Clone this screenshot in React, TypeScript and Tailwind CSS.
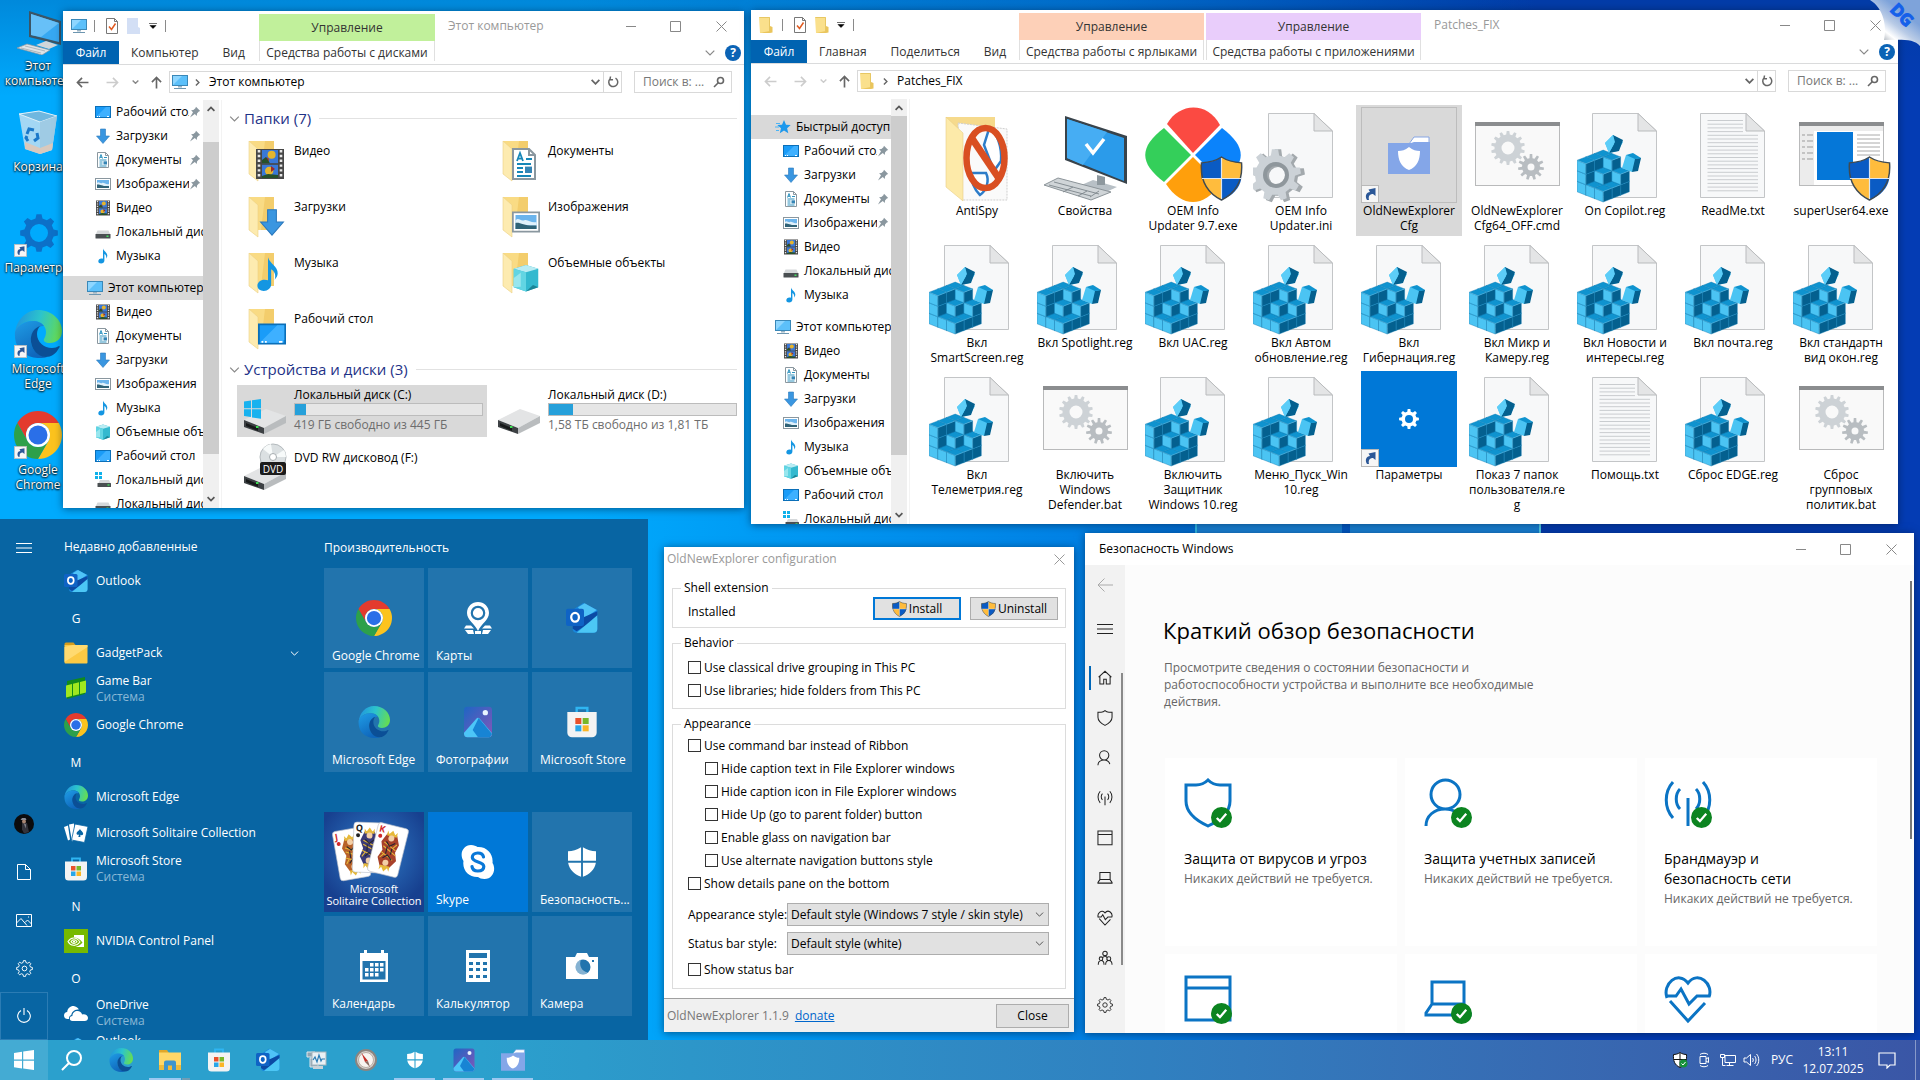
import React from 'react';
import clsx from 'clsx';

type IconProps = { className?: string };

/* ---------- shape helpers ---------- */

const gearPath = (cx: number, cy: number, outer: number, inner: number, hole: number, teeth: number) => {
  const step = (Math.PI * 2) / teeth;
  const point = (r: number, a: number) =>
    `${(cx + r * Math.cos(a)).toFixed(2)} ${(cy + r * Math.sin(a)).toFixed(2)}`;
  let d = '';
  for (let i = 0; i < teeth; i++) {
    const a = i * step - Math.PI / 2;
    d += `${i === 0 ? 'M' : 'L'}${point(inner, a - step * 0.3)}`;
    d += `L${point(outer, a - step * 0.17)}L${point(outer, a + step * 0.17)}L${point(inner, a + step * 0.3)}`;
  }
  d += 'Z';
  d += `M${cx + hole} ${cy}A${hole} ${hole} 0 1 0 ${cx - hole} ${cy}A${hole} ${hole} 0 1 0 ${cx + hole} ${cy}Z`;
  return d;
};

/* ---------- small explorer icons ---------- */

const PcIcon = ({ className }: IconProps) => (
  <svg viewBox="0 0 16 16" className={className}>
    <rect x="0.5" y="1.5" width="15" height="10" fill="#5cc0fa" stroke="#3a88b8" />
    <path d="M1 11L10 2H1z" fill="#8ed6ff" />
    <path d="M6 12h4v1.5H6z" fill="#9bb4c4" />
    <path d="M2 14.5h12" stroke="#6d96b0" />
  </svg>
);

const DesktopIcon = ({ className }: IconProps) => (
  <svg viewBox="0 0 16 16" className={className}>
    <rect x="0.5" y="2.5" width="15" height="11" fill="#1a9cf8" stroke="#0b6fb8" />
    <path d="M1 13L11 3h4v8l-2 2z" fill="#3eb0ff" />
    <path d="M2 12.5h1M4 12.5h1M12 12.5h2" stroke="#fff" />
  </svg>
);

const DownloadIcon = ({ className }: IconProps) => (
  <svg viewBox="0 0 16 16" className={className}>
    <path d="M5.5 1h5v7h4L8 15.5 1.5 8h4z" fill="#3a96e0" stroke="#2a78bc" strokeWidth="0.6" />
  </svg>
);

const DocIcon = ({ className }: IconProps) => (
  <svg viewBox="0 0 16 16" className={className}>
    <path d="M2.5 0.5h8l3 3v12h-11z" fill="#fff" stroke="#8a979f" />
    <path d="M10.5 .5v3h3" fill="none" stroke="#8a979f" />
    <path d="M4.5 6.5l1.5-4 1.5 4M5 5.3h2M9 5.5h3M4.5 8h7M4.5 10h3M4.5 12h3M4.5 14h7" stroke="#1787b8" strokeWidth="0.9" fill="none" />
    <rect x="8.5" y="9.3" width="3.5" height="3.2" fill="#3585b5" />
  </svg>
);

const PictureIcon = ({ className }: IconProps) => (
  <svg viewBox="0 0 16 16" className={className}>
    <rect x="0.5" y="2.5" width="15" height="11" fill="#fff" stroke="#8a979f" />
    <rect x="2" y="4" width="12" height="8" fill="#6bb4ec" />
    <path d="M2 7c2-2 3 1 5 0s4 2 7 1v2H2z" fill="#dff0fb" />
    <path d="M2 8.5c3-.5 5 2 12 1.5v2H2z" fill="#2f6277" />
  </svg>
);

const VideoIcon = ({ className }: IconProps) => (
  <svg viewBox="0 0 16 16" className={className}>
    <rect x="1" y="0.5" width="14" height="15" fill="#474747" />
    <path d="M2.5 1v14M13.5 1v14" stroke="#e8e8e8" strokeWidth="1.3" strokeDasharray="1.2 1.2" />
    <rect x="4" y="1" width="8" height="6.6" fill="#3978d8" />
    <rect x="4" y="8.4" width="8" height="6.6" fill="#3978d8" />
    <circle cx="8.8" cy="3.4" r="2" fill="#e5b52d" />
    <circle cx="6.3" cy="6" r="1.2" fill="#b3322c" />
    <path d="M4 6l2-1.5L8 7.6H4z" fill="#27512b" />
    <circle cx="7.6" cy="11.5" r="2.1" fill="#e5b52d" />
    <path d="M8.5 9v3l2-1.5z" fill="#9c2b2b" />
    <path d="M4 14l3-1 5 .5V15H4z" fill="#27512b" />
  </svg>
);

const DriveIcon = ({ className }: IconProps) => (
  <svg viewBox="0 0 16 16" className={className}>
    <path d="M2.5 6.5h11l2 4.5H.5z" fill="#d5d8da" />
    <rect x="0.5" y="10" width="15" height="4.5" rx="0.5" fill="#4a4f52" />
    <rect x="11.5" y="11.5" width="2" height="1.5" fill="#43e05f" />
  </svg>
);

const SystemDriveIcon = ({ className }: IconProps) => (
  <svg viewBox="0 0 16 16" className={className}>
    <path d="M0 0h3v3H0zM4 0h3v3H4zM0 4h3v3H0zM4 4h3v3H4z" fill="#0fb1ea" />
    <path d="M5 8h9l2 4H3z" fill="#d5d8da" />
    <rect x="2.5" y="11" width="13.5" height="4" rx="0.5" fill="#4a4f52" />
    <rect x="12.5" y="12.3" width="2" height="1.4" fill="#43e05f" />
  </svg>
);

const MusicIcon = ({ className }: IconProps) => (
  <svg viewBox="0 0 16 16" className={className}>
    <path d="M8 .5c.6 2.7 4.5 4 4.300 7.300 0 1.200-.7 2-1.300 2.700.7-2.400-.3-3.800-1.600-4.600v6.600c0 1.700-1.500 3-3.300 3-1.600 0-2.800-1-2.800-2.300C3.300 11.700 4.600 10.500 6.500 10.500c.6 0 1 .1 1.500.3z" fill="#1496e2" />
  </svg>
);

const CubeIcon = ({ className }: IconProps) => (
  <svg viewBox="0 0 16 16" className={className}>
    <path d="M8 .5l7 2.2v10.6L8 15.700l-7-2.400V2.700z" fill="#33b9cf" />
    <path d="M8 .5l7 2.2-7 2-7-2z" fill="#b9ecf3" />
    <path d="M1 2.700l7 2v11l-7-2.400z" fill="#62d5e3" />
    <path d="M1 8l4-3v8l-4 .3z" fill="#98e6ee" />
    <path d="M8 15.700l4-3.700 3 1.300z" fill="#1a8496" />
  </svg>
);

const StarIcon = ({ className }: IconProps) => (
  <svg viewBox="0 0 16 16" className={className}>
    <path d="M9 1l2 4.700 4.700.4-3.600 3.200 1.200 4.900L9 11.600 4.800 14.200 6 9.300 2.300 6.100 7 5.700z" fill="#1c98ec" />
    <path d="M1 4.500h4M0 8h4M1 11.500h3" stroke="#4cb4f5" />
  </svg>
);

const FolderGlyph = ({ className }: IconProps) => (
  <svg viewBox="0 0 14 16" className={className}>
    <path d="M0 0h11v16H1z" fill="#fae08c" />
    <path d="M11 9l2.500 1v5.500L11 16H1l10-2z" fill="#eac55c" />
    <path d="M.5.5h10v15" fill="none" stroke="#e7c764" />
  </svg>
);

const PinIcon = ({ className }: IconProps) => (
  <svg viewBox="0 0 12 12" className={className}>
    <path d="M7 .8L11.200 5l-1.400.6L8 7.600l-.2 2.300-2-2L1 11.500 4 6.200l-1.900-2 2.300-.2L6.400 2.200z" fill="#8a979f" />
  </svg>
);

const CheckPage = ({ className }: IconProps) => (
  <svg viewBox="0 0 14 16" className={className}>
    <path d="M1.500.5h8l3 3v12h-11z" fill="#fff" stroke="#777" />
    <path d="M9.500.5v3h3" fill="none" stroke="#777" />
    <path d="M4 8.500l2.500 3 4-6" fill="none" stroke="#e05a20" strokeWidth="1.5" />
  </svg>
);

const UacShield = ({ className }: IconProps) => (
  <svg viewBox="0 0 44 46" className={className}>
    <path d="M22 1c6 4 12 5.500 20.500 6C44 26 36 38 22 45 8 38 0 26 1.500 7 10 6.500 16 5 22 1z" fill="#ffbc3d" />
    <path d="M22 1v22H1.700C1 18 1 12 1.500 7 10 6.500 16 5 22 1z" fill="#0a5bc4" />
    <path d="M22 45V23h20.300C40.500 33 34 40 22 45z" fill="#0a5bc4" />
    <path d="M22 1c6 4 12 5.500 20.500 6C44 26 36 38 22 45 8 38 0 26 1.500 7 10 6.500 16 5 22 1z" fill="none" stroke="#3f4a52" strokeWidth="1.5" />
    <path d="M22 2v42M2 23h40" stroke="#dfe6ec" strokeWidth="1.2" />
  </svg>
);

const ShortcutArrow = ({ className }: IconProps) => (
  <svg viewBox="0 0 18 18" className={className}>
    <rect x="0.5" y="0.5" width="17" height="17" fill="#f6f6f6" stroke="#b9b9b9" />
    <path d="M6 15c-2.500-4-.5-8 3-8L7.500 4.500 14.500 3v8L12 9c-3 0-5 2-4 6z" fill="#2b5797" />
  </svg>
);

/* ---------- application icons ---------- */

const ChromeIcon = ({ className }: IconProps) => (
  <svg viewBox="0 0 48 48" className={className}>
    <path d="M24 12H44.780A24 24 0 0 0 3.220 12L13.610 30A12 12 0 0 1 24 12Z" fill="#e33b2e" />
    <path d="M34.390 30L24 48A24 24 0 0 0 44.780 12H24A12 12 0 0 1 34.390 30Z" fill="#fcc31e" />
    <path d="M13.610 30L3.220 12A24 24 0 0 0 24 48L34.390 30A12 12 0 0 1 13.610 30Z" fill="#2da04a" />
    <circle cx="24" cy="24" r="12" fill="#fff" />
    <circle cx="24" cy="24" r="9.5" fill="#2a6fe8" />
  </svg>
);

const EdgeIcon = ({ className }: IconProps) => (
  <svg viewBox="0 0 48 48" className={className}>
    <defs>
      <linearGradient id="edgeTop" x1="0" y1="0.3" x2="1" y2="0.5">
        <stop offset="0" stopColor="#2093df" />
        <stop offset="0.5" stopColor="#2cc4cc" />
        <stop offset="1" stopColor="#66dd52" />
      </linearGradient>
      <linearGradient id="edgeLeft" x1="0" y1="0" x2="0.5" y2="1">
        <stop offset="0" stopColor="#1f9de6" />
        <stop offset="1" stopColor="#0f66bb" />
      </linearGradient>
    </defs>
    <path d="M1 24C2 10 12 0 24 0c14 0 24 10 24 21 0 8-6 12-12 12-5 0-7-2-6-4s2-4 2-7c0-6-5-11-13-11C10 11 3 16 1 24z" fill="url(#edgeTop)" />
    <path d="M1 22c3-7 10-11 18-11 5 0 9 2 11 5-8 0-14 8-13 16 1 9 8 14 16 15-4 1.500-12 1.500-17-.5C5 43 0 33 1 22z" fill="url(#edgeLeft)" />
    <path d="M17 32c-1-8 3-14 9-16-2 2-3 5-3 8 0 8 7 14 15 14 3 0 5-1 7-2 1 0 1 1 0 2-3 6-8 9-13 9-8 0-14-7-15-15z" fill="#0b4f96" />
  </svg>
);

const StoreIcon = ({ className }: IconProps) => (
  <svg viewBox="0 0 24 24" className={className}>
    <path d="M8 6V1.500h8V6" fill="none" stroke="#2fb5f2" strokeWidth="1.8" />
    <path d="M1 4.500h22V20a3.500 3.500 0 0 1-3.500 3.500h-15A3.500 3.500 0 0 1 1 20z" fill="#f3f3f3" />
    <path d="M7 9h4.500v4.500H7z" fill="#e8512a" />
    <path d="M12.500 9H17v4.500h-4.500z" fill="#78b829" />
    <path d="M7 14.500h4.500V19H7z" fill="#28a6e8" />
    <path d="M12.500 14.500H17V19h-4.500z" fill="#fbb524" />
  </svg>
);

const OutlookIcon = ({ className }: IconProps) => (
  <svg viewBox="0 0 24 24" className={className}>
    <path d="M5 6L13 .8 23.500 6v14a3 3 0 0 1-3 3H8a3 3 0 0 1-3-3z" fill="#1987dc" />
    <path d="M9 4l5-3 9 5-9 6z" fill="#4fc3f7" />
    <path d="M23.500 7v5L8 22l-3-2v-5z" fill="#0b4aa4" />
    <path d="M23.500 10v10a3 3 0 0 1-3 3H8z" fill="#4cc7f5" />
    <rect x="0" y="5" width="13.5" height="13" rx="1.5" fill="#0f63c5" />
    <ellipse cx="6.8" cy="11.5" rx="2.9" ry="3.3" fill="none" stroke="#fff" strokeWidth="1.7" />
  </svg>
);

const PhotosIcon = ({ className }: IconProps) => (
  <svg viewBox="0 0 24 24" className={className}>
    <defs>
      <linearGradient id="photosBg" x1="0" y1="0" x2="1" y2="1">
        <stop offset="0" stopColor="#1e66c4" />
        <stop offset="1" stopColor="#8456b8" />
      </linearGradient>
    </defs>
    <rect x="1.5" y="0.5" width="21" height="23" rx="2.5" fill="url(#photosBg)" />
    <circle cx="17.5" cy="5" r="2" fill="#e8f4ff" />
    <path d="M1.500 20L10.700 9.500c.8-.9 1.800-.9 2.600 0L22.500 20.500c0 1.500-1 3-2.500 3H4c-1.400 0-2.500-1-2.500-2.500z" fill="#4cc6f8" />
    <path d="M12.500 9l10 12-1.500 2.500h-9L8 18z" fill="#1784d4" />
  </svg>
);

const YellowFolder = ({ className }: IconProps) => (
  <svg viewBox="0 0 24 24" className={className}>
    <path d="M.5 4.500V3A1.500 1.500 0 0 1 2 1.500h7.500L12 4.500z" fill="#d39c1d" />
    <path d="M.5 4h22A1 1 0 0 1 23.500 5v16.500a1 1 0 0 1-1 1h-21a1 1 0 0 1-1-1z" fill="#fcc944" />
    <path d="M.5 6L9 4h14.500v2L.5 21z" fill="#ffda70" />
  </svg>
);

const ExplorerIcon = ({ className }: IconProps) => (
  <svg viewBox="0 0 24 24" className={className}>
    <path d="M1 2h8l2 3H1z" fill="#e0a72a" />
    <path d="M1 4.500h22v17H1z" fill="#ffd768" />
    <path d="M1 17h22v5H1z" fill="#eebb3d" />
    <path d="M6 22.500v-8a2 2 0 0 1 2-2h8a2 2 0 0 1 2 2v8h-4v-5h-4v5z" fill="#3e95cf" />
  </svg>
);

const GameBarIcon = ({ className }: IconProps) => (
  <svg viewBox="0 0 24 24" className={className}>
    <path d="M3 4l18-4v17L3 22z" fill="#0f8a1c" />
    <path d="M2 8.500L8 7v12l-6 1.500zM9 6.700l6-1.500v12l-6 1.500zM16 5l6-1.500v12l-6 1.500z" fill="#9fe81f" />
  </svg>
);

const CardsIcon = ({ className }: IconProps) => (
  <svg viewBox="0 0 24 24" className={className}>
    <path d="M0 6l4-1.500 2 14-2 1z" fill="#fff" />
    <path d="M5 3.500l5-1 1 14-3 4z" fill="#fff" />
    <path d="M11 3l13 2.500-3.500 16L7.500 19z" fill="#fff" stroke="#0865a3" strokeWidth="0.8" />
    <path d="M16 8c1 2 4 3.500 3 5.500-.5 1-2 1-2.500.3L16.300 16h-2l.8-2.500c-1 .5-2.500.2-2.600-1C12.500 10.800 15 10 16 8z" fill="#0865a3" />
  </svg>
);

const NvidiaIcon = ({ className }: IconProps) => (
  <svg viewBox="0 0 24 24" className={className}>
    <rect width="24" height="24" fill="#76b900" />
    <path d="M10 6h10v12H10c4 0 7-2.500 8.500-4.500C16 10 13 8.500 10 8.500z" fill="#fff" />
    <path d="M4 12.500c2.500-4 8-5.500 12 .5-4 5-9.500 4-12-.5zm3 .2c1.500-2.700 4.500-2.700 6 .1-1.600 2.200-4.500 2-6-.1z" fill="none" stroke="#fff" strokeWidth="1.1" />
    <circle cx="10" cy="12.6" r="1.1" fill="#fff" />
  </svg>
);

const CloudIcon = ({ className }: IconProps) => (
  <svg viewBox="0 0 24 24" className={className}>
    <path d="M3.500 18C1.500 18 0 16.500 0 14.500s1.500-3.300 3.200-3.400C3.500 7 7 4.500 10.500 5.200c2 .4 3.500 1.600 4.300 3.300C10 8 7.500 11.500 7.300 14c-1.500.4-2.500 2-2.300 4z" fill="#fff" />
    <path d="M8.500 20C6.500 20 5.800 18.700 5.800 17.500S6.700 15 8.400 15c0-3 2.300-5 5-5 2.400 0 4.100 1.500 4.700 3.500 3-.7 5.900.8 5.900 3.500 0 2-1.500 3-3.200 3z" fill="#fff" />
  </svg>
);

const DefenderIcon = ({ className }: IconProps) => (
  <svg viewBox="0 0 24 24" className={className}>
    <path d="M11.300 1v10H1.500V4C5 4 8 3 11.300 1zM12.700 1C16 3 19 4 22.500 4v7h-9.800zM1.600 12.500h9.700V23C6 21 2.500 17.500 1.600 12.500zM22.400 12.500h-9.700V23c5.300-2 8.800-5.500 9.700-10.500z" fill="#fff" />
  </svg>
);

const SecFolderIcon = ({ className }: IconProps) => (
  <svg viewBox="0 0 42 38" className={className}>
    <path d="M21 8l5-7h15v10H21z" fill="#fff" stroke="#86a5e4" />
    <path d="M0 7h23l3-1h16v32H0z" fill="#84a6e8" />
    <path d="M21 11c4 3 7 4 11 4 0 9-3 16-11 19-8-3-11-10-11-19 4 0 7-1 11-4z" fill="#fff" />
  </svg>
);

const MapsIcon = ({ className }: IconProps) => (
  <svg viewBox="0 0 28 32" className={className}>
    <path d="M14 0c6 0 11 4.500 11 11 0 7-8 11-11 18C11 22 3 18 3 11 3 4.500 8 0 14 0z" fill="#fff" />
    <circle cx="14" cy="11" r="6.2" fill="none" stroke="#2274ad" strokeWidth="2.2" />
    <path d="M2 23.500h5l3 3H0zM21 23.500h5l2 3H18zM1 28h8l1 4H4zM19 28h8l-3 4h-6zM11 29h6v3h-6z" fill="#fff" />
  </svg>
);

const SkypeIcon = ({ className }: IconProps) => (
  <svg viewBox="0 0 34 34" className={className}>
    <path d="M10 0c3 0 5 1 6.500 2C26 1.500 32.500 9 31.500 18c4 6 .5 16-8 16-3 0-5-1-6.500-2C8 32.500 1 25 2.500 16-2 9 2 0 10 0z" fill="#fff" />
    <path d="M22.500 12c-.5-3-3-4-5.700-4-3.300 0-5.500 1.800-5.500 4.300 0 5.700 11.500 3.700 11.500 9.200 0 3-2.500 4.500-6 4.500s-5.500-2-5.800-4.500" fill="none" stroke="#0a78d8" strokeWidth="3.2" strokeLinecap="round" />
  </svg>
);

const CalendarIcon = ({ className }: IconProps) => (
  <svg viewBox="0 0 28 32" className={className}>
    <path d="M0 3h4V0h3v3h14V0h3v3h4v29H0zM2.500 11v18.500h23V11z" fill="#fff" fillRule="evenodd" />
    <path d="M10 13h3.500v3.500H10zM15 13h3.500v3.500H15zM20 13h3.500v3.500H20zM5 18h3.500v3.500H5zM10 18h3.500v3.500H10zM15 18h3.500v3.500H15zM20 18h3.500v3.500H20zM5 23h3.500v3.500H5zM10 23h3.500v3.500H10zM15 23h3.500v3.500H15z" fill="#fff" />
  </svg>
);

const CalculatorIcon = ({ className }: IconProps) => (
  <svg viewBox="0 0 24 32" className={className}>
    <path d="M0 0h24v32H0z" fill="#fff" />
    <path d="M3 3h18v5H3zM3 12h4v3H3zM10 12h4v3h-4zM17 12h4v3h-4zM3 18h4v3H3zM10 18h4v3h-4zM17 18h4v3h-4zM3 25h4v3H3zM10 25h4v3h-4zM17 25h4v3h-4z" fill="#2274ad" />
  </svg>
);

const CameraIcon = ({ className }: IconProps) => (
  <svg viewBox="0 0 32 26" className={className}>
    <path d="M0 4h9l2-4h10l2 4h9v22H0z" fill="#fff" />
    <circle cx="17" cy="14" r="7.5" fill="#2274ad" />
    <path d="M15 6.800A7.500 7.500 0 1 0 22 19.500 9 9 0 0 1 15 6.800z" fill="#fff" opacity="0.45" />
    <rect x="26" y="7" width="2" height="2" fill="#2274ad" />
  </svg>
);

/* ---------- big folder tiles ---------- */

const BigFolder = ({ children }: { children?: React.ReactNode }) => (
  <div className="relative size-12 shrink-0">
    <svg viewBox="0 0 48 48" className="size-12">
      <path d="M8 5h25v33H14z" fill="#f9db84" />
      <path d="M24 5h9v33H20z" fill="#f3cd6c" />
      <path d="M8 5l9 8v32L8 38z" fill="#fdebb0" />
      <path d="M8 38V5l9 8v32z" fill="none" stroke="#ecd083" strokeWidth="0.6" />
    </svg>
    <div className="absolute right-[3px] bottom-1">{children}</div>
  </div>
);

const BigDrive = ({ kind }: { kind: 'win' | 'plain' | 'dvd' }) => (
  <svg viewBox="0 0 48 48" className="size-12 shrink-0">
    <path d="M3 33L25 22l20 7-22 12z" fill="#e3e4e5" />
    <path d="M23 41l22-12v7L23 47z" fill="#b9bcbe" />
    <path d="M3 33l20 8v6L3 40z" fill="#3d4144" />
    <path d="M5 36l12 5v3L5 39z" fill="#17191a" />
    <rect x="15" y="39" width="2.5" height="2" fill="#3fdc55" />
    {kind === 'win' && (
      <path d="M3 14.500l7-1v7.800H3zM11 13.300l9-1.300v9.300h-9zM3 22.300h7v7.800l-7-1zM11 22.300h9v9.500l-9-1.300z" fill="#18b2ef" />
    )}
    {kind === 'dvd' && (
      <>
        <circle cx="32" cy="14" r="13" fill="#dbe0e2" stroke="#b4babd" />
        <path d="M32 14L22 6a13 13 0 0 1 8-5zM32 14l11-7a13 13 0 0 1 2 7z" fill="#f7fafa" />
        <circle cx="32" cy="14" r="3.5" fill="#fff" stroke="#a6adb0" />
        <rect x="19" y="19" width="26" height="13" rx="2" fill="#1c1c1c" />
        <text x="32" y="29.5" fill="#fff" fontSize="10" textAnchor="middle">DVD</text>
      </>
    )}
  </svg>
);

/* ---------- large file thumbnails, 96px box ---------- */

const Page = () => (
  <>
    <path d="M15.5 6.500H61L79.500 24V90.500H15.500Z" fill="#f7f8f9" stroke="#c3c5c7" />
    <path d="M61 6.500V24H79.500Z" fill="#e4e5e6" stroke="#b9bbbd" />
  </>
);

// Blocks still standing in the broken 3x3x3 cube, per layer from the bottom
const LAYERS: number[][][] = [
  [[0, 0], [0, 1], [1, 0], [0, 2], [1, 1], [2, 0], [1, 2], [2, 1], [2, 2]],
  [[0, 0], [0, 1], [1, 0], [0, 2], [1, 1], [2, 0]],
  [[0, 0], [0, 1], [1, 0], [0, 2]],
];
const UX = 8.7;
const UY = 3.4;
const UH = 10.5;

const Block = ({ x, y }: { x: number; y: number }) => (
  <g stroke="#0a77ad" strokeWidth="0.4">
    <path d={`M${x} ${y - UH}l${-UX} ${-UY}v${UH}l${UX} ${UY}z`} fill="#4bc4f3" />
    <path d={`M${x} ${y - UH}l${UX} ${-UY}v${UH}l${-UX} ${UY}z`} fill="#04608f" />
    <path d={`M${x} ${y - UH}l${-UX} ${-UY}l${UX} ${-UY}l${UX} ${UY}z`} fill="#0f93cf" />
    <path d={`M${x - UX} ${y - UH - UY}l${UX} ${UY}l${UX} ${-UY}M${x} ${y - UH}v${UH}`} fill="none" stroke="#8fdcfb" />
  </g>
);

const RegThumb = () => (
  <svg viewBox="0 0 96 96" className="size-24">
    <Page />
    {LAYERS.map((layer, k) =>
      layer.map(([a, b]) => (
        <Block key={`${k}${a}${b}`} x={26.2 + (a - b) * UX} y={81.4 + (a + b) * UY - k * UH} />
      ))
    )}
    <path d="M36 28l-8 8 4 10 9-2 5-9z" fill="#4bc4f3" />
    <path d="M36 28l10 5-4 11-10 2 5-9z" fill="#04608f" />
    <path d="M36 28l-8 8 4 10 6-11z" fill="#5ccdf8" />
    <path d="M49 48l-4 13 10 4 9-14z" fill="#4bc4f3" />
    <path d="M64 51l-3 13-6 1 3-13z" fill="#04608f" />
    <path d="M49 48l7-2 8 5-6 1z" fill="#0f93cf" />
  </svg>
);

const TextThumb = () => (
  <svg viewBox="0 0 96 96" className="size-24">
    <Page />
    {Array.from({ length: 20 }, (_, i) => (
      <path key={i} d={`M22.5 ${13.5 + i * 3.7}H${i < 4 ? 58 : 73}`} stroke="#c9cccf" />
    ))}
  </svg>
);

const IniThumb = () => (
  <svg viewBox="0 0 96 96" className="size-24">
    <Page />
    <path d={gearPath(25, 69, 27, 20, 9, 9)} fill="#a3a9ad" fillRule="evenodd" />
    <path d={gearPath(22, 68, 26, 20, 10, 9)} fill="#ccd2d7" fillRule="evenodd" />
    <circle cx="23" cy="68" r="11" fill="none" stroke="#8f979c" strokeWidth="4" />
  </svg>
);

const CmdThumb = () => (
  <svg viewBox="0 0 96 96" className="size-24">
    <rect x="6.5" y="16.5" width="84" height="62" fill="#f9f9f9" stroke="#b9babb" />
    <rect x="6" y="15" width="85" height="4" fill="#8b8d8f" />
    <path d={gearPath(39, 41, 17, 13.5, 6.5, 14)} fill="#cdd2d6" fillRule="evenodd" />
    <path d={gearPath(62, 60, 13, 9, 3.5, 11)} fill="#b8bdc1" fillRule="evenodd" />
  </svg>
);

const AntiSpyThumb = () => (
  <svg viewBox="0 0 96 96" className="size-24">
    <path d="M17 10h49v60H17z" fill="#f6da8c" />
    <path d="M29 16l49 6v71H33z" fill="#fafafa" stroke="#cfcfcf" strokeDasharray="2 1" />
    <path d="M17 10l17 16v68L17 80z" fill="#fdeaa9" stroke="#e9cf86" strokeWidth="0.6" />
    <path d="M60 22c8 2 13 18 12 32l-7 10-10-26zM42 66h15c4 8 0 18-6 22-5-5-9-13-9-22z" fill="#fff" stroke="#2d7cc8" strokeWidth="2.5" />
    <ellipse cx="56.5" cy="51" rx="19" ry="30" fill="none" stroke="#d94f22" strokeWidth="6.5" />
    <path d="M42 30l29 43" stroke="#d94f22" strokeWidth="7" />
  </svg>
);

const PropertiesThumb = () => (
  <svg viewBox="0 0 96 96" className="size-24">
    <path d="M28 9L90 29v48L28 53z" fill="#39434b" />
    <path d="M30 12l57 19v43L30 51z" fill="#2b9bea" />
    <path d="M30 12l40 13-24 33-16-7z" fill="#46adf3" />
    <path d="M49 37l7 9L67 32" fill="none" stroke="#fff" strokeWidth="3.5" />
    <path d="M42 79l14-6 24 7-13 6z" fill="#b8c0c6" />
    <path d="M60 68l8 2v8h-8z" fill="#8e989e" />
    <path d="M7 78l14-7 53 14-20 8z" fill="#d0d5d8" stroke="#8c9499" />
    <path d="M12 78l42 11M17 75l45 12M50 84l-9 5M36 80l-10 5M62 84l-9 6" stroke="#7d868b" strokeWidth="0.9" />
  </svg>
);

const OemThumb = () => (
  <svg viewBox="0 0 96 96" className="size-24">
    <path d="M22 17C34-4 62-6 75 18L48 46z" fill="#fb4a42" />
    <path d="M19 21L46 48 19 75C-6 56-6 40 19 21z" fill="#34cf5a" />
    <path d="M77 21L50 48l27 27c25-19 25-35 0-54z" fill="#0b83fb" />
    <path d="M48 50L21 77c16 24 38 24 54 0z" fill="#ff9f0c" />
  </svg>
);

const SuperUserThumb = () => (
  <svg viewBox="0 0 96 96" className="size-24">
    <rect x="6.5" y="16.5" width="84" height="62" fill="#fff" stroke="#b9babb" />
    <path d="M6 15h85v4H6z" fill="#8b8d8f" />
    <path d="M7 19h83v5H7zM7 24h14v54H7z" fill="#ececec" />
    <path d="M9 28h3M14 28h6M9 34h3M14 34h6M9 40h3M14 40h6M9 46h3M14 46h6M9 52h3M14 52h6" stroke="#9b9b9b" />
    <rect x="24" y="25" width="36" height="48" fill="#0577d8" />
    <path d="M64 28h23M64 32h23M64 36h23M64 40h23M64 44h23M64 48h23" stroke="#aaa" />
  </svg>
);

const ShieldFolderThumb = () => (
  <div className="flex size-24 items-center justify-center border border-[#bdbdbd]">
    <SecFolderIcon className="h-[38px] w-[42px]" />
  </div>
);

const SettingsThumb = () => (
  <div className="flex size-24 items-center justify-center bg-[#0078d7]">
    <svg viewBox="0 0 20 20" className="size-5">
      <path d={gearPath(10, 10, 10, 7.5, 4, 8)} fill="#fff" fillRule="evenodd" />
    </svg>
  </div>
);

/* ---------- window chrome ---------- */

const CloseGlyph = () => (
  <svg viewBox="0 0 11 11" className="size-[11px]">
    <path d="M.5.5l10 10M10.5.5l-10 10" stroke="currentColor" fill="none" />
  </svg>
);

const WindowControls = () => (
  <div className="flex h-full text-[#888]">
    <button aria-label="Свернуть" className="flex w-[45px] items-center justify-center">
      <svg viewBox="0 0 10 10" className="size-[10px]"><path d="M0 5.5h10" stroke="currentColor" /></svg>
    </button>
    <button aria-label="Развернуть" className="flex w-[45px] items-center justify-center">
      <svg viewBox="0 0 11 11" className="size-[11px]"><path d="M.5.5h10v10H.5z" fill="none" stroke="currentColor" /></svg>
    </button>
    <button aria-label="Закрыть" className="flex w-[46px] items-center justify-center">
      <CloseGlyph />
    </button>
  </div>
);

const Chevron = ({ className, width = 1.2 }: { className?: string; width?: number }) => (
  <svg viewBox="0 0 10 6" className={className}>
    <path d="M.7.7L5 5 9.300.7" fill="none" stroke="currentColor" strokeWidth={width} />
  </svg>
);

const Arrow = ({ className }: IconProps) => (
  <svg viewBox="0 0 14 12" className={className}>
    <path d="M13.500 6H1.500M6.500 1l-5 5 5 5" fill="none" stroke="currentColor" strokeWidth="1.8" />
  </svg>
);

type ContextTab = { title: string; label: string; header: string; width: string };
type NavItem = { label: string; icon: React.FC<IconProps>; root?: boolean; pinned?: boolean; selected?: boolean };

type ExplorerProps = {
  frame: string;
  title: string;
  icon: React.ReactNode;
  newFolder: React.ReactNode;
  leftWidth: string;
  tabs: string[];
  contextTabs: ContextTab[];
  canGoBack?: boolean;
  nav: NavItem[];
  navPadding?: string;
  thumb: string;
  children: React.ReactNode;
};

const ExplorerWindow = (p: ExplorerProps) => (
  <section
    aria-label={p.title}
    className={clsx('absolute flex flex-col overflow-hidden bg-white shadow-[0_1px_8px_rgba(0,20,50,0.55)]', p.frame)}
  >
    <header className="flex h-[54px] shrink-0 border-b border-[#dadbdc]">
      <div className={clsx('flex shrink-0 flex-col', p.leftWidth)}>
        <div className="flex h-[30px] items-center pl-2">
          <span className="flex w-[23px]">{p.icon}</span>
          <span className="mr-[10px] h-3 w-px bg-[#8a8a8a]" />
          <CheckPage className="h-4 w-[14px]" />
          <span className="ml-2 flex w-[14px]">{p.newFolder}</span>
          <svg viewBox="0 0 8 6" className="mx-2 h-[6px] w-2"><path d="M0 .5h8M1 2.500h6L4 5.500z" stroke="#111" strokeWidth="0.6" /></svg>
          <span className="h-3 w-px bg-[#8a8a8a]" />
        </div>
        <div className="flex h-[23px] items-center">
          <button className="flex h-full w-14 shrink-0 items-center justify-center bg-[#0063b1] pt-px text-white">Файл</button>
          {p.tabs.map((tab) => (
            <button key={tab} className="h-full shrink-0 px-3 pt-px text-[#333]">{tab}</button>
          ))}
        </div>
      </div>
      {p.contextTabs.map((tab) => (
        <div key={tab.label} className={clsx('mr-[2px] shrink-0 pt-[3px] text-center text-[#333]', tab.width)}>
          <div className={clsx('h-[27px] leading-7', tab.header)}>{tab.title}</div>
          <button className="h-[20px] w-full border-x border-[#e0e0e0] leading-6 whitespace-nowrap">{tab.label}</button>
        </div>
      ))}
      <div className="flex min-w-0 flex-1 flex-col">
        <div className="flex h-[30px] items-center">
          <h2 className="flex-1 pl-[11px] text-[#999]">{p.title}</h2>
          <WindowControls />
        </div>
        <div className="flex h-[23px] items-center justify-end gap-[10px] pr-[3px]">
          <Chevron className="h-[6px] w-[10px] text-[#888]" />
          <button className="flex size-4 items-center justify-center rounded-full bg-[#0b63b5] text-[12px] font-bold text-white">?</button>
        </div>
      </div>
    </header>

    <div className="flex h-[34px] shrink-0 items-center pl-1">
      <button aria-label="Назад" className={clsx('flex w-[30px] justify-center', p.canGoBack ? 'text-[#666]' : 'text-[#ccc]')}>
        <Arrow className="h-[11px] w-[13px]" />
      </button>
      <button aria-label="Вперед" className="flex w-[30px] justify-center text-[#ccc]"><Arrow className="h-[11px] w-[13px] rotate-180" /></button>
      <button aria-label="Последние расположения" className={clsx('flex w-4 justify-center', p.canGoBack ? 'text-[#888]' : 'text-[#ccc]')}>
        <Chevron className="h-1 w-[7px]" width={2} />
      </button>
      <button aria-label="Вверх" className="flex w-[26px] justify-center text-[#666]"><Arrow className="h-[11px] w-[13px] rotate-90" /></button>
      <div className="flex h-[22px] flex-1 items-center border border-[#d9d9d9]">
        <span className="flex w-5 pl-[2px]">{p.icon}</span>
        <Chevron className="mx-1 h-[5px] w-[7px] -rotate-90 text-[#666]" width={2} />
        <span className="flex-1 pl-1">{p.title}</span>
        <Chevron className="mr-[3px] h-[6px] w-[9px] text-[#666]" width={2} />
        <button aria-label="Обновить" className="flex h-full w-[18px] items-center justify-center border-l border-[#d9d9d9]">
          <svg viewBox="0 0 12 12" className="size-3"><path d="M8.500 2.200A4.500 4.500 0 1 1 3 3M3.500.5L3 3.500l3 .3" fill="none" stroke="#666" strokeWidth="1.5" /></svg>
        </button>
      </div>
      <label className="mr-3 ml-3 flex h-[22px] w-[98px] items-center border border-[#d9d9d9] pl-2">
        <input aria-label={`Поиск в: ${p.title}`} placeholder="Поиск в: ..." className="w-[66px] outline-none placeholder:text-[#777]" />
        <svg viewBox="0 0 12 12" className="ml-1 size-3"><path d="M1 11l4-4M4.500 4.500a3 3 0 1 1 6 0 3 3 0 0 1-6 0z" fill="none" stroke="#666" strokeWidth="1.6" /></svg>
      </label>
    </div>

    <div className="flex min-h-0 flex-1 pt-px">
      <nav className={clsx('w-[140px] shrink-0 overflow-hidden', p.navPadding)}>
        {p.nav.map((item, i) => (
          <button
            key={i}
            className={clsx(
              'flex h-6 w-full items-center text-left',
              item.root ? 'pl-6' : 'pl-8',
              item.root && i > 0 && 'mt-2',
              item.selected && 'bg-[#d9d9d9]'
            )}
          >
            <item.icon className="size-4 shrink-0" />
            <span className="min-w-0 flex-1 overflow-hidden pl-[5px] whitespace-nowrap">{item.label}</span>
            {item.pinned && <PinIcon className="mr-[2px] size-3 shrink-0" />}
          </button>
        ))}
      </nav>
      <div className="mr-[2px] flex w-4 shrink-0 flex-col items-center bg-[#f0f0f0] py-[6px] text-[#555]">
        <Chevron className="h-[6px] w-2 rotate-180" width={2.2} />
        <div className="my-[5px] flex w-full flex-1 flex-col">
          <div className={clsx('w-full bg-[#cdcdcd]', p.thumb)} />
        </div>
        <Chevron className="h-[6px] w-2" width={2.2} />
      </div>
      <div className="min-w-0 flex-1 border-l border-[#f3f3f3]">{p.children}</div>
    </div>
  </section>
);

/* ---------- "This PC" ---------- */

const quickAccess: NavItem[] = [
  { label: 'Рабочий стол', icon: DesktopIcon, pinned: true },
  { label: 'Загрузки', icon: DownloadIcon, pinned: true },
  { label: 'Документы', icon: DocIcon, pinned: true },
  { label: 'Изображения', icon: PictureIcon, pinned: true },
  { label: 'Видео', icon: VideoIcon },
  { label: 'Локальный диск', icon: DriveIcon },
  { label: 'Музыка', icon: MusicIcon },
];

const thisPc: NavItem[] = [
  { label: 'Видео', icon: VideoIcon },
  { label: 'Документы', icon: DocIcon },
  { label: 'Загрузки', icon: DownloadIcon },
  { label: 'Изображения', icon: PictureIcon },
  { label: 'Музыка', icon: MusicIcon },
  { label: 'Объемные объекты', icon: CubeIcon },
  { label: 'Рабочий стол', icon: DesktopIcon },
  { label: 'Локальный диск', icon: SystemDriveIcon },
  { label: 'Локальный диск', icon: DriveIcon },
];

const folders = [
  { label: 'Видео', icon: <VideoIcon className="size-8" /> },
  { label: 'Документы', icon: <DocIcon className="size-8" /> },
  { label: 'Загрузки', icon: <DownloadIcon className="size-7" /> },
  { label: 'Изображения', icon: <PictureIcon className="size-7" /> },
  { label: 'Музыка', icon: <MusicIcon className="size-9" /> },
  { label: 'Объемные объекты', icon: <CubeIcon className="size-7" /> },
  { label: 'Рабочий стол', icon: <DesktopIcon className="size-7" /> },
];

const SectionTitle = ({ children }: { children: React.ReactNode }) => (
  <h3 className="flex h-5 items-center pb-px text-[15px] text-[#1e3287]">
    <Chevron className="mr-1 h-[6px] w-[11px] text-[#888]" />
    {children}
    <span className="ml-2 h-px flex-1 bg-[#e2e2e2]" />
  </h3>
);

const Drive = ({ name, free, used, selected, kind }: { name: string; free: string; used: number; selected?: boolean; kind: 'win' | 'plain' }) => (
  <button className={clsx('flex h-[52px] items-center gap-[5px] pr-1 pl-1 text-left', selected && 'bg-[#d9d9d9]')}>
    <BigDrive kind={kind} />
    <span className="flex-1 pb-px">
      <span className="block leading-4">{name}</span>
      <span className="block h-[13px] border border-[#bcbcbc] bg-[#e6e6e6]">
        <span className="block h-full bg-[#26a0da]" style={{ width: `${used}%` }} />
      </span>
      <span className="block leading-[18px] text-[#6d6d6d]">{free}</span>
    </span>
  </button>
);

const ThisPcWindow = () => (
  <ExplorerWindow
    frame="top-[11px] left-[63px] h-[497px] w-[681px]"
    title="Этот компьютер"
    icon={<PcIcon className="size-4" />}
    newFolder={<svg viewBox="0 0 14 16" className="h-4 w-[14px]"><path d="M0 0h11v9l2 1v6H0z" fill="#d3dff5" /></svg>}
    leftWidth="w-[196px]"
    tabs={['Компьютер', 'Вид']}
    contextTabs={[{ title: 'Управление', label: 'Средства работы с дисками', header: 'bg-[#c1f09b]', width: 'w-[176px]' }]}
    canGoBack
    nav={[...quickAccess, { label: 'Этот компьютер', icon: PcIcon, root: true, selected: true }, ...thisPc]}
    thumb="mt-[25px] h-[312px]"
  >
    <div className="flex flex-col gap-[6px] px-[7px] pt-[9px]">
      <div>
        <SectionTitle>Папки (7)</SectionTitle>
        <div className="mt-[5px] grid grid-cols-[250px_250px] gap-1 pl-2">
          {folders.map((f) => (
            <button key={f.label} className="flex h-[52px] items-start gap-[5px] pt-[2px] pl-1 text-left">
              <BigFolder>{f.icon}</BigFolder>
              <span className="pt-[7px] leading-4">{f.label}</span>
            </button>
          ))}
        </div>
      </div>
      <div>
        <SectionTitle>Устройства и диски (3)</SectionTitle>
        <div className="mt-[5px] grid grid-cols-[250px_250px] gap-1 pl-2">
          <Drive name="Локальный диск (C:)" free="419 ГБ свободно из 445 ГБ" used={6} kind="win" selected />
          <Drive name="Локальный диск (D:)" free="1,58 ТБ свободно из 1,81 ТБ" used={13} kind="plain" />
          <button className="flex h-[52px] items-start gap-[5px] pt-[2px] pl-1 text-left">
            <BigDrive kind="dvd" />
            <span className="pt-[7px] leading-4">DVD RW дисковод (F:)</span>
          </button>
        </div>
      </div>
    </div>
  </ExplorerWindow>
);

/* ---------- "Patches_FIX" ---------- */

type FileItem = { name: string; thumb: React.FC; shield?: boolean; shortcut?: boolean; selected?: boolean };

const files: FileItem[] = [
  { name: 'AntiSpy', thumb: AntiSpyThumb },
  { name: 'Свойства', thumb: PropertiesThumb },
  { name: 'OEM Info\nUpdater 9.7.exe', thumb: OemThumb, shield: true },
  { name: 'OEM Info\nUpdater.ini', thumb: IniThumb },
  { name: 'OldNewExplorer\nCfg', thumb: ShieldFolderThumb, shortcut: true, selected: true },
  { name: 'OldNewExplorer\nCfg64_OFF.cmd', thumb: CmdThumb },
  { name: 'On Copilot.reg', thumb: RegThumb },
  { name: 'ReadMe.txt', thumb: TextThumb },
  { name: 'superUser64.exe', thumb: SuperUserThumb, shield: true },
  { name: 'Вкл\nSmartScreen.reg', thumb: RegThumb },
  { name: 'Вкл Spotlight.reg', thumb: RegThumb },
  { name: 'Вкл UAC.reg', thumb: RegThumb },
  { name: 'Вкл Автом\nобновление.reg', thumb: RegThumb },
  { name: 'Вкл\nГибернация.reg', thumb: RegThumb },
  { name: 'Вкл Микр и\nКамеру.reg', thumb: RegThumb },
  { name: 'Вкл Новости и\nинтересы.reg', thumb: RegThumb },
  { name: 'Вкл почта.reg', thumb: RegThumb },
  { name: 'Вкл стандартн\nвид окон.reg', thumb: RegThumb },
  { name: 'Вкл\nТелеметрия.reg', thumb: RegThumb },
  { name: 'Включить\nWindows\nDefender.bat', thumb: CmdThumb },
  { name: 'Включить\nЗащитник\nWindows 10.reg', thumb: RegThumb },
  { name: 'Меню_Пуск_Win\n10.reg', thumb: RegThumb },
  { name: 'Параметры', thumb: SettingsThumb, shortcut: true },
  { name: 'Показ 7 папок\nпользователя.re\ng', thumb: RegThumb },
  { name: 'Помощь.txt', thumb: TextThumb },
  { name: 'Сброс EDGE.reg', thumb: RegThumb },
  { name: 'Сброс\nгрупповых\nполитик.bat', thumb: CmdThumb },
];

const PatchesWindow = () => (
  <ExplorerWindow
    frame="top-[10px] left-[751px] h-[514px] w-[1147px]"
    title="Patches_FIX"
    icon={<FolderGlyph className="h-4 w-[14px]" />}
    newFolder={<FolderGlyph className="h-4 w-[14px]" />}
    leftWidth="w-[268px]"
    tabs={['Главная', 'Поделиться', 'Вид']}
    contextTabs={[
      { title: 'Управление', label: 'Средства работы с ярлыками', header: 'bg-[#fdd0b8]', width: 'w-[185px]' },
      { title: 'Управление', label: 'Средства работы с приложениями', header: 'bg-[#e9cdfb]', width: 'w-[215px]' },
    ]}
    nav={[
      { label: 'Быстрый доступ', icon: StarIcon, root: true, selected: true },
      ...quickAccess,
      { label: 'Этот компьютер', icon: PcIcon, root: true },
      ...thisPc,
    ]}
    navPadding="pt-4"
    thumb="h-[339px]"
  >
    <div className="grid grid-cols-[repeat(9,106px)] gap-x-[2px] pt-[6px] pl-[14px]">
      {files.map((f) => (
        <button key={f.name} className="flex h-[132px] items-start">
          <span className={clsx('flex w-full flex-col items-center pt-[2px]', f.selected && 'h-[131px] bg-[#d9d9d9]')}>
            <span className="relative block">
              <f.thumb />
              {f.shield && <UacShield className="absolute -right-[2px] bottom-[2px] h-[45px] w-[43px]" />}
              {f.shortcut && <ShortcutArrow className="absolute bottom-0 left-0 size-[18px]" />}
            </span>
            <span className="leading-[15px] whitespace-pre">{f.name}</span>
          </span>
        </button>
      ))}
    </div>
  </ExplorerWindow>
);

/* ---------- start menu ---------- */

const startApps: { letter?: string; name?: string; sub?: string; icon?: React.FC<IconProps>; expandable?: boolean }[] = [
  { name: 'Outlook', icon: OutlookIcon },
  { letter: 'G' },
  { name: 'GadgetPack', icon: YellowFolder, expandable: true },
  { name: 'Game Bar', sub: 'Система', icon: GameBarIcon },
  { name: 'Google Chrome', icon: ChromeIcon },
  { letter: 'M' },
  { name: 'Microsoft Edge', icon: EdgeIcon },
  { name: 'Microsoft Solitaire Collection', icon: CardsIcon },
  { name: 'Microsoft Store', sub: 'Система', icon: StoreIcon },
  { letter: 'N' },
  { name: 'NVIDIA Control Panel', icon: NvidiaIcon },
  { letter: 'O' },
  { name: 'OneDrive', sub: 'Система', icon: CloudIcon },
  { name: 'Outlook', sub: 'Новое', icon: OutlookIcon },
];

const Tile = ({ label, className, children }: { label?: string; className?: string; children: React.ReactNode }) => (
  <button className={clsx('relative flex size-[100px] items-center justify-center', className ?? 'bg-[#2274ad]')}>
    {children}
    {label && <span className="absolute bottom-1 left-2 leading-4 whitespace-nowrap">{label}</span>}
  </button>
);

type CardProps = { x: number; y: number; angle: number; rank: string; color: string; robe: string };

const PlayingCard = ({ x, y, angle, rank, color, robe }: CardProps) => (
  <g transform={`translate(${x} ${y}) rotate(${angle})`}>
    <rect width="31" height="50" rx="3" fill="#fff" stroke="#b8bfca" strokeWidth="0.6" />
    <path d="M11 9h10l4 9-2 8 3 8-5 8H11l-4-8 3-8-3-8z" fill={robe} />
    <path d="M11 6l2 3 3-4 3 4 2-3v5H11zM11 46l2-3 3 4 3-4 2 3v-5H11z" fill="#e6b93a" />
    <circle cx="16" cy="13" r="3" fill="#f3cfa6" />
    <circle cx="16" cy="38" r="3" fill="#f3cfa6" />
    <path d="M10 22l14 7M9 28l13 6M10 18l13 6M12 30l-3 4M23 18l-3 4" stroke="#e6b93a" strokeWidth="1.1" />
    <path d="M12 17l4 4 5-4M12 34l4-4 5 4M14 22v7M19 23v6" stroke="#26262e" strokeWidth="1.1" fill="none" />
    <text x="2" y="9" fontSize="9" fontWeight="bold" fill={color}>{rank}</text>
    <circle cx="4.5" cy="13" r="2" fill={color} />
  </g>
);

const SolitaireTile = () => (
  <button className="relative size-[100px] bg-[radial-gradient(circle_at_50%_40%,#2f7cc8,#17408f_75%)]">
    <svg viewBox="0 0 100 100" className="size-full">
      <PlayingCard x={8} y={20} angle={-10} rank="J" color="#cf2a2a" robe="#b8622a" />
      <PlayingCard x={30} y={10} angle={2} rank="Q" color="#222" robe="#3a3a78" />
      <PlayingCard x={55} y={10} angle={14} rank="K" color="#cf2a2a" robe="#a8412a" />
    </svg>
    <span className="absolute inset-x-0 bottom-[5px] text-center text-[11px] leading-[12px] whitespace-pre">{'Microsoft\nSolitaire Collection'}</span>
  </button>
);

const RailButton = ({ label, children, boxed }: { label: string; children: React.ReactNode; boxed?: boolean }) => (
  <button aria-label={label} className={clsx('flex size-12 items-center justify-center', boxed && 'border border-[#2b7cb4]')}>
    {children}
  </button>
);

const StartMenu = () => (
  <section aria-label="Пуск" className="absolute bottom-0 left-0 flex h-[521px] w-[648px] overflow-hidden bg-[#0865a3] text-white">
    <div className="flex w-12 shrink-0 flex-col justify-between pt-[5px]">
      <RailButton label="Меню">
        <svg viewBox="0 0 16 10" className="h-[10px] w-4"><path d="M0 .5h16M0 5h16M0 9.500h16" stroke="#fff" /></svg>
      </RailButton>
      <div>
        <RailButton label="Учетная запись">
          <svg viewBox="0 0 20 20" className="size-5">
            <circle cx="10" cy="10" r="10" fill="#0b0b0d" />
            <path d="M8 9l5 0 2 9-5 1.500-2-4z" fill="#33333b" />
            <circle cx="10" cy="7.5" r="2" fill="#a98673" />
            <path d="M6.500 6h6l-1-2H8zM10 9.500l1.500 5 .5-4z" fill="#8b8b93" />
          </svg>
        </RailButton>
        <RailButton label="Документы">
          <svg viewBox="0 0 14 16" className="h-4 w-[14px]"><path d="M.5.5h8l5 5v10H.5zM8.500.5v5h5" fill="none" stroke="#fff" /></svg>
        </RailButton>
        <RailButton label="Изображения">
          <svg viewBox="0 0 16 13" className="h-[13px] w-4"><path d="M.5.5h15v12H.5zM.5 9L5 4.500l6 7M9 8.500L11.500 6l4 4M12 3h1" fill="none" stroke="#fff" /></svg>
        </RailButton>
        <RailButton label="Параметры">
          <svg viewBox="0 0 18 18" className="size-[17px]"><path d={gearPath(9, 9, 8.4, 6.5, 2.5, 8)} fill="none" stroke="#fff" /></svg>
        </RailButton>
        <RailButton label="Выключение" boxed>
          <svg viewBox="0 0 16 16" className="size-4"><path d="M5 2.500a6.300 6.300 0 1 0 6 0M8 0v7" fill="none" stroke="#fff" strokeWidth="1.1" /></svg>
        </RailButton>
      </div>
    </div>
    <div className="w-[276px] shrink-0 pt-5 pl-4">
      <h3 className="mb-2 leading-4">Недавно добавленные</h3>
      {startApps.map((app, i) =>
        app.letter ? (
          <div key={i} className="flex h-9 w-6 items-center justify-center pt-[3px]">{app.letter}</div>
        ) : (
          <button key={i} className="flex h-9 w-full items-center gap-2 text-left">
            {app.icon && <app.icon className="size-6 shrink-0" />}
            <span className="flex-1 leading-4">
              {app.name}
              {app.sub && <span className="block text-[#8ab8d6]">{app.sub}</span>}
            </span>
            {app.expandable && <Chevron className="mr-[25px] h-[5px] w-[9px]" />}
          </button>
        )
      )}
    </div>
    <div className="pt-[21px]">
      <h3 className="mb-3 leading-4">Производительность</h3>
      <div className="grid grid-cols-[100px_100px_100px] gap-1">
        <Tile label="Google Chrome"><ChromeIcon className="size-9" /></Tile>
        <Tile label="Карты"><MapsIcon className="h-8 w-7" /></Tile>
        <Tile><OutlookIcon className="size-8" /></Tile>
        <Tile label="Microsoft Edge"><EdgeIcon className="size-8" /></Tile>
        <Tile label="Фотографии"><PhotosIcon className="size-8" /></Tile>
        <Tile label="Microsoft Store"><StoreIcon className="size-8" /></Tile>
      </div>
      <div className="mt-10 grid grid-cols-[100px_100px_100px] gap-1">
        <SolitaireTile />
        <Tile label="Skype" className="bg-[#0078d7]"><SkypeIcon className="size-[34px]" /></Tile>
        <Tile label="Безопасность..."><DefenderIcon className="size-8" /></Tile>
        <Tile label="Календарь"><CalendarIcon className="h-8 w-7" /></Tile>
        <Tile label="Калькулятор"><CalculatorIcon className="h-8 w-6" /></Tile>
        <Tile label="Камера"><CameraIcon className="h-[26px] w-8" /></Tile>
      </div>
    </div>
  </section>
);

/* ---------- OldNewExplorer dialog ---------- */

const Check = ({ label, indent }: { label: string; indent?: boolean }) => (
  <label className={clsx('flex h-[23px] items-center gap-[3px]', indent && 'pl-[17px]')}>
    <input type="checkbox" className="size-[13px] appearance-none border border-[#333] bg-white checked:bg-[#0078d7]" />
    {label}
  </label>
);

const GroupBox = ({ title, className, children }: { title: string; className?: string; children: React.ReactNode }) => (
  <fieldset className={clsx('min-w-0 border border-[#dcdcdc] pr-[7px] pl-[15px]', className)}>
    <legend className="-ml-[7px] px-[3px] leading-4">{title}</legend>
    {children}
  </fieldset>
);

const StyleSelect = ({ label, id, value }: { label: string; id: string; value: string }) => (
  <div className="flex h-[29px] items-center">
    <label htmlFor={id} className="w-[99px] shrink-0 whitespace-nowrap">{label}</label>
    <div className="relative">
      <select id={id} className="h-[23px] w-[262px] appearance-none border border-[#adadad] bg-[#e1e1e1] pl-[3px]">
        <option>{value}</option>
      </select>
      <Chevron className="pointer-events-none absolute top-[9px] right-[5px] h-[5px] w-[9px] text-[#555]" />
    </div>
  </div>
);

const DialogButton = ({ label, primary }: { label: string; primary?: boolean }) => (
  <button
    className={clsx(
      'flex h-[23px] w-[88px] items-center justify-center gap-[2px] bg-[#e1e1e1]',
      primary ? 'border-2 border-[#0078d7]' : 'border border-[#adadad]'
    )}
  >
    <UacShield className="h-4 w-[15px]" />
    {label}
  </button>
);

const ConfigDialog = () => (
  <section aria-label="OldNewExplorer configuration" className="absolute top-[547px] left-[664px] flex h-[485px] w-[410px] flex-col bg-white shadow-[0_1px_8px_rgba(0,20,50,0.55)]">
    <header className="flex h-6 shrink-0 items-center justify-between pr-[9px] pl-[3px] text-[#999]">
      <h2>OldNewExplorer configuration</h2>
      <button aria-label="Close window"><CloseGlyph /></button>
    </header>
    <div className="flex flex-1 flex-col gap-[7px] px-2 pt-[9px]">
      <GroupBox title="Shell extension" className="h-12">
        <div className="flex items-start gap-[9px] pt-px">
          <span className="flex-1 pt-[7px] leading-4">Installed</span>
          <DialogButton label="Install" primary />
          <DialogButton label="Uninstall" />
        </div>
      </GroupBox>
      <GroupBox title="Behavior" className="h-[74px]">
        <div className="pt-[5px]">
          <Check label="Use classical drive grouping in This PC" />
          <Check label="Use libraries; hide folders from This PC" />
        </div>
      </GroupBox>
      <GroupBox title="Appearance" className="h-[273px]">
        <div className="pt-[2px]">
          <Check label="Use command bar instead of Ribbon" />
          <Check label="Hide caption text in File Explorer windows" indent />
          <Check label="Hide caption icon in File Explorer windows" indent />
          <Check label="Hide Up (go to parent folder) button" indent />
          <Check label="Enable glass on navigation bar" indent />
          <Check label="Use alternate navigation buttons style" indent />
          <Check label="Show details pane on the bottom" />
        </div>
        <div className="pt-[5px]">
          <StyleSelect id="appearance-style" label="Appearance style:" value="Default style (Windows 7 style / skin style)" />
          <StyleSelect id="status-style" label="Status bar style:" value="Default style (white)" />
          <Check label="Show status bar" />
        </div>
      </GroupBox>
    </div>
    <footer className="flex h-[34px] shrink-0 items-center border-t border-[#a0a0a0] bg-[#f0f0f0] pr-[5px] pl-[3px] text-[#777]">
      <span>OldNewExplorer 1.1.9</span>
      <span className="flex-1 pl-[6px]"><a href="#donate" className="text-[#0066cc] underline">donate</a></span>
      <button className="h-6 w-[73px] border border-[#adadad] bg-[#e1e1e1] text-black">Close</button>
    </footer>
  </section>
);

/* ---------- Windows Security ---------- */

const securityShapes: Record<string, string> = {
  home: 'M4 22L24 4l20 18M8 19v25h12V29h8v15h12V19',
  shield: 'M24 2c3 3 8 5 12 5h10v16c0 11-9 19-22 25C11 42 2 34 2 23V7h10c4 0 9-2 12-5z',
  person: 'M21 31c-11 0-19 7-19 17M7 16.500a14.500 14.500 0 1 1 29 0 14.500 14.500 0 0 1-29 0zM21 31c9 0 16 5 18 13',
  network: 'M24 20v28M16 11c-5 5-5 15 0 20M32 11c5 5 5 15 0 20M9 4c-9 10-9 26 0 36M39 4c9 10 9 26 0 36',
  browser: 'M2 3h44v43H2zM2 14h44',
  laptop: 'M8 8h32v22H8zM8 30l-6 9v2h44v-2l-6-9',
  heart: 'M3 24C-2 10 14-4 24 9 34-4 50 10 45 23M3 22h9l5-7 8 15 8-8h13M6 27l18 20 17-18',
  family: 'M17 11a7 7 0 1 1 14 0 7 7 0 0 1-14 0zM6 27a5 5 0 1 1 11 0 5 5 0 0 1-11 0zM30 27a6 6 0 1 1 12 0 6 6 0 0 1-12 0zM3 46c0-8 3-13 9-13s9 5 9 13M26 46c0-8 4-13 10-13s10 5 10 13M18 23l6-5 6 5v8',
};

const SecurityIcon = ({ kind, className, stroke }: { kind: string; className: string; stroke: number }) => (
  <svg viewBox="0 0 48 50" className={className}>
    <path d={securityShapes[kind]} fill="none" stroke="currentColor" strokeWidth={stroke} />
  </svg>
);

const cards = [
  { icon: 'shield', label: 'Защита от вирусов', title: 'Защита от вирусов и угроз', ok: true },
  { icon: 'person', label: 'Учетные записи', title: 'Защита учетных записей', ok: true },
  { icon: 'network', label: 'Брандмауэр', title: 'Брандмауэр и\nбезопасность сети', ok: true },
  { icon: 'browser', label: 'Приложения и браузер', ok: true },
  { icon: 'laptop', label: 'Безопасность устройства', ok: true },
  { icon: 'heart', label: 'Производительность устройства' },
];

const railItems = ['home', 'shield', 'person', 'network', 'browser', 'laptop', 'heart', 'family'];

const SecurityWindow = () => (
  <section aria-label="Безопасность Windows" className="absolute top-[533px] left-[1085px] flex h-[500px] w-[829px] flex-col overflow-hidden bg-white shadow-[0_1px_8px_rgba(0,20,50,0.55)]">
    <header className="flex h-8 shrink-0 items-center justify-between pl-[14px]">
      <h2>Безопасность Windows</h2>
      <WindowControls />
    </header>
    <div className="flex min-h-0 flex-1 bg-[#fcfcfc]">
      <div className="relative flex w-10 shrink-0 flex-col items-center bg-[#f2f2f2]">
        <button aria-label="Назад" className="flex h-10 items-center text-[#aaa]">
          <svg viewBox="0 0 16 14" className="h-[14px] w-4"><path d="M16 7H1M7.500.5L1 7l6.500 6.500" fill="none" stroke="currentColor" /></svg>
        </button>
        <button aria-label="Меню" className="flex h-12 items-center">
          <svg viewBox="0 0 16 10" className="h-[10px] w-4"><path d="M0 .5h16M0 5h16M0 9.500h16" stroke="#222" /></svg>
        </button>
        <div className="mt-[5px] w-full">
          {railItems.map((kind) => (
            <button key={kind} aria-label={kind} className="relative flex h-10 w-full items-center justify-center text-[#222]">
              {kind === 'home' && <span className="absolute top-2 left-1 h-6 w-[2px] bg-[#0067b8]" />}
              <SecurityIcon kind={kind} className="size-4" stroke={3.2} />
            </button>
          ))}
        </div>
        <button aria-label="Параметры" className="flex h-[54px] items-center">
          <svg viewBox="0 0 18 18" className="size-4"><path d={gearPath(9, 9, 8.4, 6.5, 2.5, 8)} fill="none" stroke="#222" /></svg>
        </button>
        <span className="absolute top-[108px] right-[2px] h-[292px] w-[2px] bg-[#8a8a8a]" />
      </div>
      <main className="min-w-0 flex-1 overflow-hidden pt-12 pl-[38px]">
        <h1 className="text-[22px] leading-[34px]">Краткий обзор безопасности</h1>
        <p className="mt-3 w-[400px] pl-px leading-[17px] text-[#666]">
          Просмотрите сведения о состоянии безопасности и работоспособности устройства и выполните все необходимые действия.
        </p>
        <div className="mt-12 ml-[2px] grid grid-cols-[232px_232px_232px] gap-2">
          {cards.map((card) => (
            <button key={card.icon} aria-label={card.label} className="flex h-[188px] flex-col items-start bg-white px-[19px] pt-5 text-left">
              <span className="relative block text-[#0b74c4]">
                <SecurityIcon kind={card.icon} className="h-[50px] w-12" stroke={3} />
                {card.ok && (
                  <svg viewBox="0 0 20 20" className="absolute right-0 bottom-0 size-[21px]">
                    <circle cx="10" cy="10" r="10" fill="#0c8420" />
                    <path d="M5.500 10.500l3 3 6-7" fill="none" stroke="#fff" strokeWidth="2.2" />
                  </svg>
                )}
              </span>
              {card.title && (
                <>
                  <span className="mt-[21px] text-[14px] leading-5 whitespace-pre">{card.title}</span>
                  <span className="leading-5 whitespace-nowrap text-[#666]">Никаких действий не требуется.</span>
                </>
              )}
            </button>
          ))}
        </div>
      </main>
      <div className="mt-4 mr-[2px] h-[258px] w-[2px] bg-[#777]" />
    </div>
  </section>
);

/* ---------- desktop ---------- */

const PcBig = ({ className }: IconProps) => (
  <svg viewBox="0 0 48 48" className={className}>
    <path d="M15 4l32 10v24L15 30z" fill="#3b5566" />
    <path d="M17 7l28 9v19l-28-7z" fill="#37a8f2" />
    <path d="M17 7l28 9-18 14-10-2z" fill="#67c0f8" />
    <path d="M22 38l10-4 12 4-9 4z" fill="#cfd6da" />
    <path d="M3 41l10-4 23 6-8 5z" fill="#dfe3e6" stroke="#8d979d" strokeWidth="0.7" />
    <path d="M7 41l20 5M11 39l20 5" stroke="#8d979d" strokeWidth="0.6" />
  </svg>
);

const BinIcon = ({ className }: IconProps) => (
  <svg viewBox="0 0 48 48" className={className}>
    <path d="M5 6l20-3 18 5-5 34-12 4-15-5z" fill="#bfdff2" opacity="0.85" />
    <path d="M5 6l20-3 18 5-17 6z" fill="#6fb7df" stroke="#dff1fa" />
    <path d="M26 14v32l12-4 5-34z" fill="#9fcbe4" />
    <path d="M11 34l15 6 13-5-1 7-12 4-15-5z" fill="#d9c9bd" />
    <path d="M13 26l2-5 5 1M23 25l1 5-4 3M14 33l-2-3 1-2" fill="none" stroke="#1a78c9" strokeWidth="3" />
  </svg>
);

const GearBig = ({ className }: IconProps) => (
  <svg viewBox="0 0 48 48" className={className}>
    <path d={gearPath(25, 24, 19, 15, 9, 8)} fill="#0c70c8" fillRule="evenodd" />
  </svg>
);

const shortcuts = [
  { label: 'Этот\nкомпьютер', icon: PcBig },
  { label: 'Корзина', icon: BinIcon },
  { label: 'Параметры', icon: GearBig, link: true },
  { label: 'Microsoft\nEdge', icon: EdgeIcon, link: true },
  { label: 'Google\nChrome', icon: ChromeIcon, link: true },
];

const CornerPeel = () => (
  <svg viewBox="0 0 50 46" className="absolute top-0 right-0 h-[46px] w-[50px]">
    <defs>
      <linearGradient id="peel" x1="0.2" y1="0.9" x2="0.7" y2="0.3">
        <stop offset="0" stopColor="#9aa3ad" />
        <stop offset="0.3" stopColor="#ffffff" />
        <stop offset="0.6" stopColor="#b9cbe6" />
        <stop offset="1" stopColor="#7ea3da" />
      </linearGradient>
    </defs>
    <path d="M0 0h50v46C44 38 28 40 14 40 17 28 14 8 0 0z" fill="url(#peel)" />
    <text x="32" y="21" fontSize="17" fontWeight="bold" fill="#1560ea" stroke="#1560ea" textAnchor="middle" transform="rotate(45 32 15)">DG</text>
  </svg>
);

const MonitorIcon = ({ className }: IconProps) => (
  <svg viewBox="0 0 24 24" className={className}>
    <path d="M2 4h8v5H2zM5 10h8v9H5z" fill="#8fa5b3" stroke="#dfe8ed" />
    <rect x="7" y="4" width="14" height="13" fill="#e9f1f5" stroke="#a8b5bc" />
    <path d="M8 12l2-3 2 5 2-7 2 6 1-2h3" fill="none" stroke="#2a7cb5" strokeWidth="1.2" />
    <path d="M8 18h10v3H8z" fill="#c8d2d8" />
  </svg>
);

const CompassIcon = ({ className }: IconProps) => (
  <svg viewBox="0 0 24 24" className={className}>
    <circle cx="12" cy="12" r="10" fill="#d9d2cc" stroke="#8b8580" strokeWidth="2" />
    <circle cx="12" cy="12" r="7.5" fill="#f8f4f0" stroke="#b9afa7" />
    <path d="M7.500 5l6.500 8-3 1z" fill="#c22e26" />
    <path d="M16 19l-5-5 3-1z" fill="#8a6a60" />
  </svg>
);

const pinned = [
  { label: 'Microsoft Edge', icon: EdgeIcon },
  { label: 'Проводник', icon: ExplorerIcon, open: 'double' },
  { label: 'Microsoft Store', icon: StoreIcon },
  { label: 'Outlook', icon: OutlookIcon },
  { label: 'Монитор', icon: MonitorIcon },
  { label: 'Компас', icon: CompassIcon },
  { label: 'Безопасность Windows', icon: DefenderIcon, open: 'single' },
  { label: 'Фотографии', icon: PhotosIcon, open: 'single' },
  { label: 'OldNewExplorer', icon: SecFolderIcon, open: 'single' },
];

const Taskbar = () => (
  <footer className="flex h-10 shrink-0 items-stretch bg-linear-to-r from-[#2ba0cd] from-25% via-[#3080c0] via-60% to-[#3a56a6] text-white">
    <button aria-label="Пуск" className="flex w-12 items-center justify-center bg-white/12">
      <svg viewBox="0 0 20 20" className="size-5"><path d="M0 3l8-1.200v7.700H0zM9.200 1.600L20 0v9.500H9.200zM0 10.700h8v7.700L0 17.200zM9.200 10.700H20V20L9.200 18.500z" fill="#fff" /></svg>
    </button>
    <button aria-label="Поиск" className="flex w-12 items-center justify-center">
      <svg viewBox="0 0 22 22" className="size-[22px]"><path d="M1 21l6.500-6.500M6 9a7 7 0 1 1 14 0A7 7 0 0 1 6 9z" fill="none" stroke="#fff" strokeWidth="2" /></svg>
    </button>
    {pinned.map((app) => (
      <button key={app.label} aria-label={app.label} className="relative flex w-[49px] items-center justify-center">
        <app.icon className={app.icon === DefenderIcon ? 'size-[18px]' : 'size-6'} />
        {app.open && (
          <span className="absolute inset-x-1 bottom-0 flex h-[2px]">
            <span className="flex-1 bg-[#9cc8f0]" />
            {app.open === 'double' && <span className="ml-px w-2 bg-[#6f9db5]" />}
          </span>
        )}
      </button>
    ))}
    <div className="flex flex-1 items-center justify-end">
      <button aria-label="Безопасность" className="flex w-6 justify-center">
        <svg viewBox="0 0 16 16" className="size-4">
          <path d="M8 .5c2 1.500 4.500 2 6.500 2 .5 6-1 10.500-6.500 13C2.500 13 1 8.500 1.500 2.500 3.500 2.500 6 2 8 .5z" fill="#fff" stroke="#111" />
          <path d="M8 1v14M2 7.500h12" stroke="#111" />
          <circle cx="11.5" cy="11.5" r="4" fill="#16913a" />
          <path d="M9.500 11.500l1.500 1.500 2.500-3" stroke="#fff" fill="none" />
        </svg>
      </button>
      <button aria-label="Камера" className="flex w-6 justify-center">
        <svg viewBox="0 0 16 16" className="size-4"><path d="M4 4.500h6v7H4zM10 7l2.500-1.500v5L10 9M4 2.500C6 .8 10 .8 12 2.500M4 13.500c2 1.700 6 1.700 8 0" fill="none" stroke="#fff" /></svg>
      </button>
      <button aria-label="Сеть" className="flex w-6 justify-center">
        <svg viewBox="0 0 16 16" className="size-4"><path d="M5 3.500h10.500v7H5zM9.500 10.500v3M6.500 13.500h7M.5 2.500h4v3h-4zM2.500 5.500v8h3" fill="none" stroke="#fff" /></svg>
      </button>
      <button aria-label="Громкость" className="flex w-6 justify-center">
        <svg viewBox="0 0 18 16" className="h-4 w-[18px]"><path d="M1 6h2.500L7.500 2.500v11L3.500 10H1zM9.500 6c1 1 1 3 0 4M11.500 4c2 2 2 6 0 8M13.500 2c3 3 3 9 0 12" fill="none" stroke="#fff" /></svg>
      </button>
      <button className="w-9">РУС</button>
      <button className="w-[66px] text-center leading-[17px]">
        <span className="block">13:11</span>
        <span className="block">12.07.2025</span>
      </button>
      <button aria-label="Уведомления" className="mr-[19px] ml-3 flex">
        <svg viewBox="0 0 18 17" className="h-[17px] w-[18px]"><path d="M1 1h16v12h-5l-3 3v-3H1z" fill="none" stroke="#fff" strokeWidth="1.2" /></svg>
      </button>
      <span className="mr-1 h-full w-px bg-white/40" />
    </div>
  </footer>
);

export default function App() {
  return (
    <div className="flex h-screen w-full flex-col overflow-hidden bg-[#0a6fd8] font-['Open_Sans',sans-serif] text-[12px] text-black">
      <div className="relative min-h-0 flex-1 overflow-hidden bg-linear-to-r from-[#00aafd] from-30% via-[#0080e4] via-57% to-[#043cb4] to-80%">
        <div className="absolute inset-x-0 top-0 h-24 bg-linear-to-b from-[#003c8c]/30 to-transparent" />
        <div className="absolute top-[520px] left-[1195px] flex h-4 w-[346px] gap-2">
          <span className="w-[147px] border-l-2 border-[#35c4ee] bg-[#1a86dc]" />
          <span className="flex-1 border-r-2 border-[#55d8f0] bg-[#1a86dc]" />
        </div>

        <ul className="relative flex w-[76px] flex-col pt-[7px]">
          {shortcuts.map((s) => (
            <li key={s.label}>
              <button className="flex h-[101px] w-full flex-col items-center">
                <span className="relative block">
                  <s.icon className="size-12" />
                  {s.link && <ShortcutArrow className="absolute bottom-0 left-0 size-[13px]" />}
                </span>
                <span className="mt-[3px] leading-[15px] whitespace-pre text-white [text-shadow:0_1px_2px_#000,0_0_2px_#000]">{s.label}</span>
              </button>
            </li>
          ))}
        </ul>

        <ThisPcWindow />
        <PatchesWindow />
        <StartMenu />
        <ConfigDialog />
        <SecurityWindow />
        <CornerPeel />
      </div>
      <Taskbar />
    </div>
  );
}
